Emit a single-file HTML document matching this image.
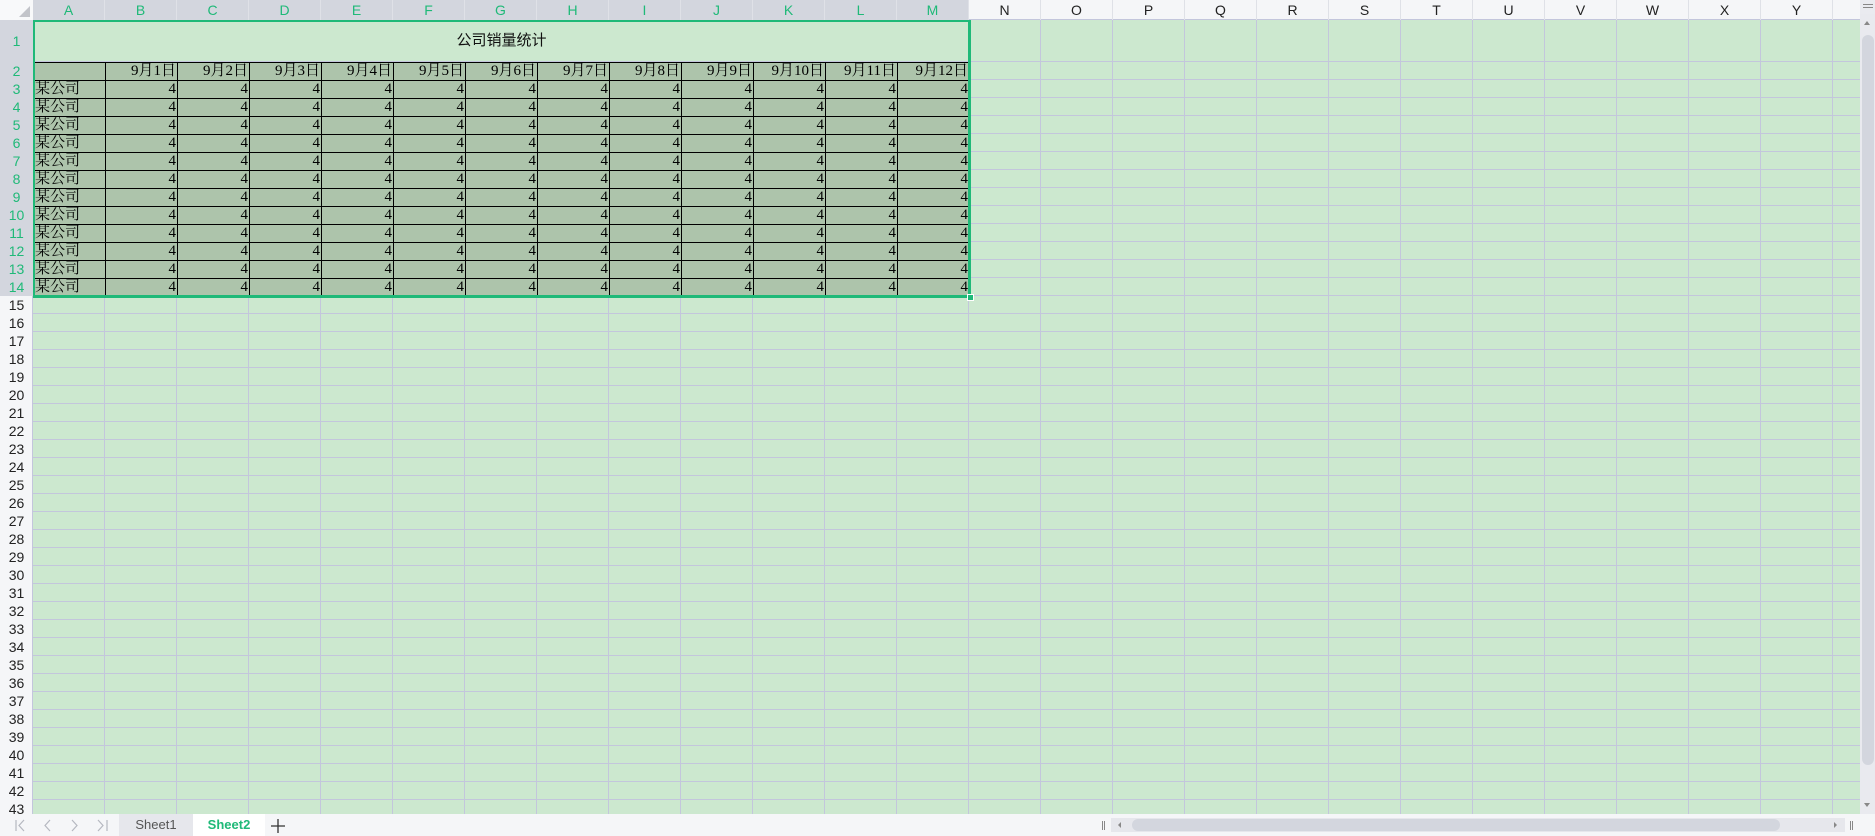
<!DOCTYPE html>
<html><head><meta charset="utf-8"><style>
*{margin:0;padding:0;box-sizing:border-box}
body{width:1875px;height:836px;overflow:hidden;background:#cce8cf;position:relative;font-family:"Liberation Sans","Noto Sans CJK SC",sans-serif}
.abs{position:absolute}
#grid{left:33px;top:20px;width:1827px;height:794px;
background-image:
linear-gradient(to right, transparent 71px, #c3c6dc 71px, #c3c6dc 72px),
linear-gradient(to bottom, transparent 17px, #c3c6dc 17px, #c3c6dc 18px);
background-size:72px 100%, 100% 18px;background-position:0 0, 0 42px}
#r1all{left:33px;top:20px;width:1827px;height:41px;background-color:#cce8cf;background-image:linear-gradient(to right, transparent 71px, #c3c6dc 71px, #c3c6dc 72px);background-size:72px 100%}
#r1cover{left:33px;top:20px;width:937px;height:41px;background:#cce8cf}
#r1line{left:33px;top:61px;width:1827px;height:1px;background:#c3c6dc}
#colh{left:0;top:0;width:1860px;height:20px;background:#f5f6f8;border-bottom:1px solid #c3c6dc}
#colh div{position:absolute;top:0;height:20px;width:72px;text-align:center;font-size:14px;line-height:20px;color:#222;border-right:1px solid #dfe1e7}
#colh div.s{background:#d3d6de;color:#1fb978}
#rowh{left:0;top:20px;width:33px;height:794px;background:#f5f6f8;border-right:1px solid #c3c6dc}
#rowh div{position:absolute;left:0;width:33px;height:18px;text-align:center;font-size:14px;line-height:18px;color:#222}
#rowh div.s{background:#d3d6de;color:#1fb978}
#corner{left:0;top:0;width:33px;height:20px;background:#f8f9fa}
#corner:after{content:"";position:absolute;right:3px;bottom:3px;border-style:solid;border-width:0 0 11px 11px;border-color:transparent transparent #c2c4c9 transparent}
#title{left:33px;top:20px;width:937px;height:42px;text-align:center;line-height:30px;font-size:15px;color:#111;padding-top:6px}
table{position:absolute;left:33px;top:62px;border-collapse:collapse;font-family:"Liberation Serif","Noto Serif CJK SC",serif;font-size:15px;color:#000}
td{width:72px;height:18px;border:1.5px solid #000;background:#adc4ab;text-align:right;line-height:15px;padding:0 1px;overflow:hidden;white-space:nowrap}
td.a{text-align:left}
#sel{left:32px;top:19px;width:939px;height:279px;border:3px solid #1fb978}
#handle{left:967px;top:294px;width:7px;height:7px;background:#1fb978;border:1px solid #fff}
#bottom{left:0;top:814px;width:1875px;height:22px;background:#f5f6f8}
#vs{left:1860px;top:0;width:15px;height:814px;background:#eaebf0}
</style></head><body>
<div id="grid" class="abs"></div>
<div id="r1all" class="abs"></div>
<div id="r1cover" class="abs"></div>
<div id="r1line" class="abs"></div>
<div id="title" class="abs">公司销量统计</div>
<table>
<tr><td></td><td>9月1日</td><td>9月2日</td><td>9月3日</td><td>9月4日</td><td>9月5日</td><td>9月6日</td><td>9月7日</td><td>9月8日</td><td>9月9日</td><td>9月10日</td><td>9月11日</td><td>9月12日</td></tr>
<tr><td class="a">某公司</td><td>4</td><td>4</td><td>4</td><td>4</td><td>4</td><td>4</td><td>4</td><td>4</td><td>4</td><td>4</td><td>4</td><td>4</td></tr>
<tr><td class="a">某公司</td><td>4</td><td>4</td><td>4</td><td>4</td><td>4</td><td>4</td><td>4</td><td>4</td><td>4</td><td>4</td><td>4</td><td>4</td></tr>
<tr><td class="a">某公司</td><td>4</td><td>4</td><td>4</td><td>4</td><td>4</td><td>4</td><td>4</td><td>4</td><td>4</td><td>4</td><td>4</td><td>4</td></tr>
<tr><td class="a">某公司</td><td>4</td><td>4</td><td>4</td><td>4</td><td>4</td><td>4</td><td>4</td><td>4</td><td>4</td><td>4</td><td>4</td><td>4</td></tr>
<tr><td class="a">某公司</td><td>4</td><td>4</td><td>4</td><td>4</td><td>4</td><td>4</td><td>4</td><td>4</td><td>4</td><td>4</td><td>4</td><td>4</td></tr>
<tr><td class="a">某公司</td><td>4</td><td>4</td><td>4</td><td>4</td><td>4</td><td>4</td><td>4</td><td>4</td><td>4</td><td>4</td><td>4</td><td>4</td></tr>
<tr><td class="a">某公司</td><td>4</td><td>4</td><td>4</td><td>4</td><td>4</td><td>4</td><td>4</td><td>4</td><td>4</td><td>4</td><td>4</td><td>4</td></tr>
<tr><td class="a">某公司</td><td>4</td><td>4</td><td>4</td><td>4</td><td>4</td><td>4</td><td>4</td><td>4</td><td>4</td><td>4</td><td>4</td><td>4</td></tr>
<tr><td class="a">某公司</td><td>4</td><td>4</td><td>4</td><td>4</td><td>4</td><td>4</td><td>4</td><td>4</td><td>4</td><td>4</td><td>4</td><td>4</td></tr>
<tr><td class="a">某公司</td><td>4</td><td>4</td><td>4</td><td>4</td><td>4</td><td>4</td><td>4</td><td>4</td><td>4</td><td>4</td><td>4</td><td>4</td></tr>
<tr><td class="a">某公司</td><td>4</td><td>4</td><td>4</td><td>4</td><td>4</td><td>4</td><td>4</td><td>4</td><td>4</td><td>4</td><td>4</td><td>4</td></tr>
<tr><td class="a">某公司</td><td>4</td><td>4</td><td>4</td><td>4</td><td>4</td><td>4</td><td>4</td><td>4</td><td>4</td><td>4</td><td>4</td><td>4</td></tr>
</table>
<div id="sel" class="abs"></div>
<div id="handle" class="abs"></div>
<div id="colh" class="abs">
<div class="s" style="left:33px">A</div><div class="s" style="left:105px">B</div><div class="s" style="left:177px">C</div><div class="s" style="left:249px">D</div><div class="s" style="left:321px">E</div><div class="s" style="left:393px">F</div><div class="s" style="left:465px">G</div><div class="s" style="left:537px">H</div><div class="s" style="left:609px">I</div><div class="s" style="left:681px">J</div><div class="s" style="left:753px">K</div><div class="s" style="left:825px">L</div><div class="s" style="left:897px">M</div><div style="left:969px">N</div><div style="left:1041px">O</div><div style="left:1113px">P</div><div style="left:1185px">Q</div><div style="left:1257px">R</div><div style="left:1329px">S</div><div style="left:1401px">T</div><div style="left:1473px">U</div><div style="left:1545px">V</div><div style="left:1617px">W</div><div style="left:1689px">X</div><div style="left:1761px">Y</div><div style="left:1833px">Z</div>
</div>
<div id="corner" class="abs"></div>
<div id="rowh" class="abs">
<div class="s" style="top:0;height:42px;line-height:42px">1</div>
<div class="s" style="top:42px">2</div><div class="s" style="top:60px">3</div><div class="s" style="top:78px">4</div><div class="s" style="top:96px">5</div><div class="s" style="top:114px">6</div><div class="s" style="top:132px">7</div><div class="s" style="top:150px">8</div><div class="s" style="top:168px">9</div><div class="s" style="top:186px">10</div><div class="s" style="top:204px">11</div><div class="s" style="top:222px">12</div><div class="s" style="top:240px">13</div><div class="s" style="top:258px">14</div>
<div style="top:276px">15</div><div style="top:294px">16</div><div style="top:312px">17</div><div style="top:330px">18</div><div style="top:348px">19</div><div style="top:366px">20</div><div style="top:384px">21</div><div style="top:402px">22</div><div style="top:420px">23</div><div style="top:438px">24</div><div style="top:456px">25</div><div style="top:474px">26</div><div style="top:492px">27</div><div style="top:510px">28</div><div style="top:528px">29</div><div style="top:546px">30</div><div style="top:564px">31</div><div style="top:582px">32</div><div style="top:600px">33</div><div style="top:618px">34</div><div style="top:636px">35</div><div style="top:654px">36</div><div style="top:672px">37</div><div style="top:690px">38</div><div style="top:708px">39</div><div style="top:726px">40</div><div style="top:744px">41</div><div style="top:762px">42</div><div style="top:780px">43</div>
</div>
<div id="vs" class="abs">
<div class="abs" style="left:3px;top:4px;width:10px;height:1px;background:#888"></div>
<div class="abs" style="left:3px;top:7px;width:10px;height:1px;background:#888"></div>
<div class="abs" style="left:0;top:14px;width:15px;height:800px;background:#e9eaef"></div>
<div class="abs" style="left:4px;top:21px;border-style:solid;border-width:0 3px 4px 3px;border-color:transparent transparent #888 transparent"></div>
<div class="abs" style="left:2px;top:35px;width:12px;height:730px;background:#d3d6de;border-radius:6px"></div>
<div class="abs" style="left:4px;top:803px;border-style:solid;border-width:4px 3px 0 3px;border-color:#888 transparent transparent transparent"></div>
</div>
<div id="bottom" class="abs">
<svg class="abs" style="left:10px;top:3px" width="100" height="16" viewBox="0 0 100 16" fill="none" stroke="#b5b8c0" stroke-width="1.2">
<path d="M6 3v11M14 3l-5 5.5 5 5.5"/><path d="M40 3l-5 5.5 5 5.5"/><path d="M62 3l5 5.5-5 5.5"/><path d="M88 3l5 5.5-5 5.5M97 3v11"/>
</svg>
<div class="abs" style="left:119px;top:0;width:74px;height:22px;background:#e6e7ec;text-align:center;font-size:13px;line-height:22px;color:#555">Sheet1</div>
<div class="abs" style="left:193px;top:0;width:72px;height:22px;background:#fff;text-align:center;font-size:13px;line-height:22px;color:#1fb978;font-weight:bold">Sheet2</div>
<svg class="abs" style="left:270px;top:4px" width="16" height="16" fill="none" stroke="#333" stroke-width="1.3"><path d="M8 1v14M1 8h14"/></svg>
<div class="abs" style="left:1102px;top:7px;width:1px;height:9px;background:#888"></div><div class="abs" style="left:1104px;top:7px;width:1px;height:9px;background:#888"></div>
<div class="abs" style="left:1111px;top:4px;width:734px;height:14px;background:#e6e7ec"></div>
<div class="abs" style="left:1118px;top:8px;border-style:solid;border-width:3px 3px 3px 0;border-color:transparent #888 transparent transparent"></div>
<div class="abs" style="left:1132px;top:5px;width:648px;height:12px;background:#d3d6de;border-radius:6px"></div>
<div class="abs" style="left:1834px;top:8px;border-style:solid;border-width:3px 0 3px 3px;border-color:transparent transparent transparent #888"></div>
<div class="abs" style="left:1850px;top:7px;width:1px;height:9px;background:#888"></div><div class="abs" style="left:1852px;top:7px;width:1px;height:9px;background:#888"></div>
</div>
</body></html>
